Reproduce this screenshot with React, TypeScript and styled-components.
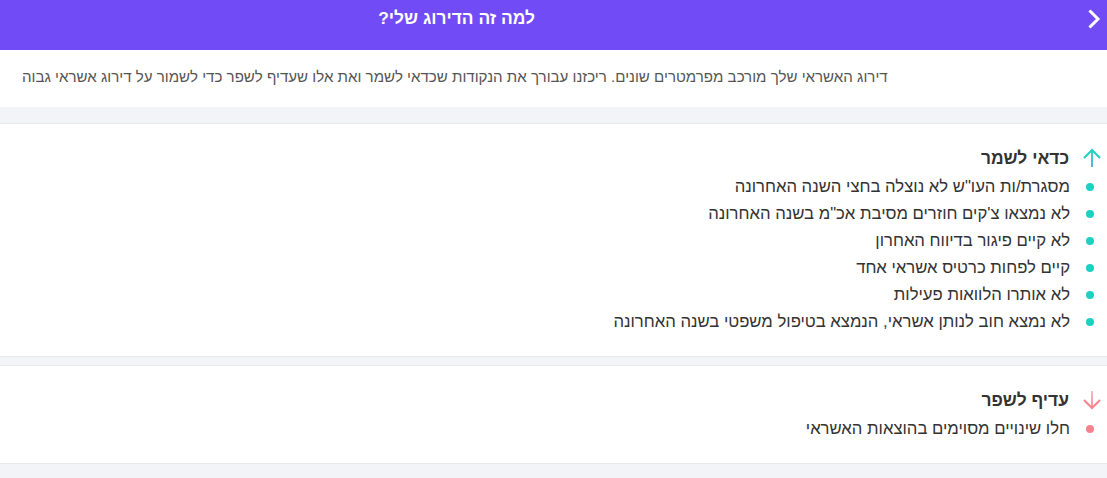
import styled, { createGlobalStyle } from 'styled-components';

const GlobalStyle = createGlobalStyle`
  html, body {
    margin: 0;
    padding: 0;
    background: #f3f4f7;
    font-family: "Liberation Sans", Arial, sans-serif;
  }
`;

const Page = styled.div`
  direction: rtl;
  min-height: 478px;
  background: #f3f4f7;
`;

const Header = styled.header`
  display: flex;
  align-items: flex-start;
  height: 50px;
  background: #714cf6;
  color: #fff;
  padding: 0 3px 0 0;
  box-sizing: border-box;
`;

const BackButton = styled.button`
  display: flex;
  align-items: center;
  justify-content: center;
  width: 20px;
  height: 38px;
  padding: 0;
  border: 0;
  background: none;
  cursor: pointer;
`;

const Title = styled.h1`
  margin: 7px 0 0 0;
  padding-right: 549px;
  font-size: 17.4px;
  font-weight: bold;
  line-height: 22px;
`;

const Intro = styled.p`
  margin: 0;
  background: #fff;
  height: 57px;
  padding: 0 22px 4px;
  box-sizing: border-box;
  display: flex;
  align-items: center;
  justify-content: flex-end;
  font-size: 15.1px;
  color: #555;
`;

const Card = styled.section<{ $gapTop: number }>`
  margin-top: ${p => p.$gapTop}px;
  background: #fff;
  border-top: 1px solid #e8e9ec;
  border-bottom: 1px solid #e8e9ec;
  padding: 23px 5px 21px 0;
`;

const CardTitle = styled.h2`
  display: flex;
  align-items: center;
  gap: 13px;
  margin: 0 0 4px 0;
  font-size: 17.4px;
  font-weight: bold;
  color: #333;
  line-height: 22px;
`;

const List = styled.ul`
  list-style: none;
  margin: 0;
  padding: 0;
`;

const Item = styled.li<{ $dot: string }>`
  display: flex;
  align-items: center;
  gap: 16px;
  font-size: 16.7px;
  color: #333;
  line-height: 27px;

  &::before {
    content: '';
    width: 8px;
    height: 8px;
    margin-right: 8px;
    border-radius: 50%;
    background: ${p => p.$dot};
    flex-shrink: 0;
  }
`;

const Chevron = () => (
  <svg width="14" height="20" viewBox="0 0 14 20">
    <path d="M3.5 2.5 L11 10 L3.5 17.5" fill="none" stroke="#fff" strokeWidth="3" strokeLinecap="square" />
  </svg>
);

const Arrow = ({ up }: { up: boolean }) => {
  const id = up ? 'gUp' : 'gDown';
  const head = up ? '#1fd2c3' : '#f8838f';
  const tail = up ? '#4aa6d8' : '#f7b2c3';
  return (
    <svg width="20" height="20" viewBox="0 0 20 20">
      <defs>
        <linearGradient id={id} gradientUnits="userSpaceOnUse" x1="10" y1={up ? 2 : 18} x2="10" y2={up ? 19 : 1}>
          <stop offset="0" stopColor={head} />
          <stop offset="1" stopColor={tail} />
        </linearGradient>
      </defs>
      {up ? (
        <>
          <path d="M10 2 V19" stroke={`url(#${id})`} strokeWidth="1.8" />
          <path d="M2 10 L10 2 L18 10" fill="none" stroke={head} strokeWidth="2" />
        </>
      ) : (
        <>
          <path d="M10 1 V18" stroke={`url(#${id})`} strokeWidth="1.8" />
          <path d="M2 10 L10 18 L18 10" fill="none" stroke={head} strokeWidth="2" />
        </>
      )}
    </svg>
  );
};

const keep = [
  'מסגרת/ות העו"ש לא נוצלה בחצי השנה האחרונה',
  "לא נמצאו צ'קים חוזרים מסיבת אכ\"מ בשנה האחרונה",
  'לא קיים פיגור בדיווח האחרון',
  'קיים לפחות כרטיס אשראי אחד',
  'לא אותרו הלוואות פעילות',
  'לא נמצא חוב לנותן אשראי, הנמצא בטיפול משפטי בשנה האחרונה',
];

const improve = ['חלו שינויים מסוימים בהוצאות האשראי'];

export default function App() {
  return (
    <>
      <GlobalStyle />
      <Page>
        <Header>
          <BackButton aria-label="חזרה">
            <Chevron />
          </BackButton>
          <Title>למה זה הדירוג שלי?</Title>
        </Header>
        <Intro>
          דירוג האשראי שלך מורכב מפרמטרים שונים. ריכזנו עבורך את הנקודות שכדאי לשמר ואת אלו שעדיף לשפר כדי לשמור על דירוג אשראי גבוה
        </Intro>
        <Card $gapTop={16}>
          <CardTitle>
            <Arrow up />
            כדאי לשמר
          </CardTitle>
          <List>
            {keep.map(t => <Item key={t} $dot="#1ecfc2">{t}</Item>)}
          </List>
        </Card>
        <Card $gapTop={8}>
          <CardTitle>
            <Arrow up={false} />
            עדיף לשפר
          </CardTitle>
          <List>
            {improve.map(t => <Item key={t} $dot="#f8838f">{t}</Item>)}
          </List>
        </Card>
      </Page>
    </>
  );
}
